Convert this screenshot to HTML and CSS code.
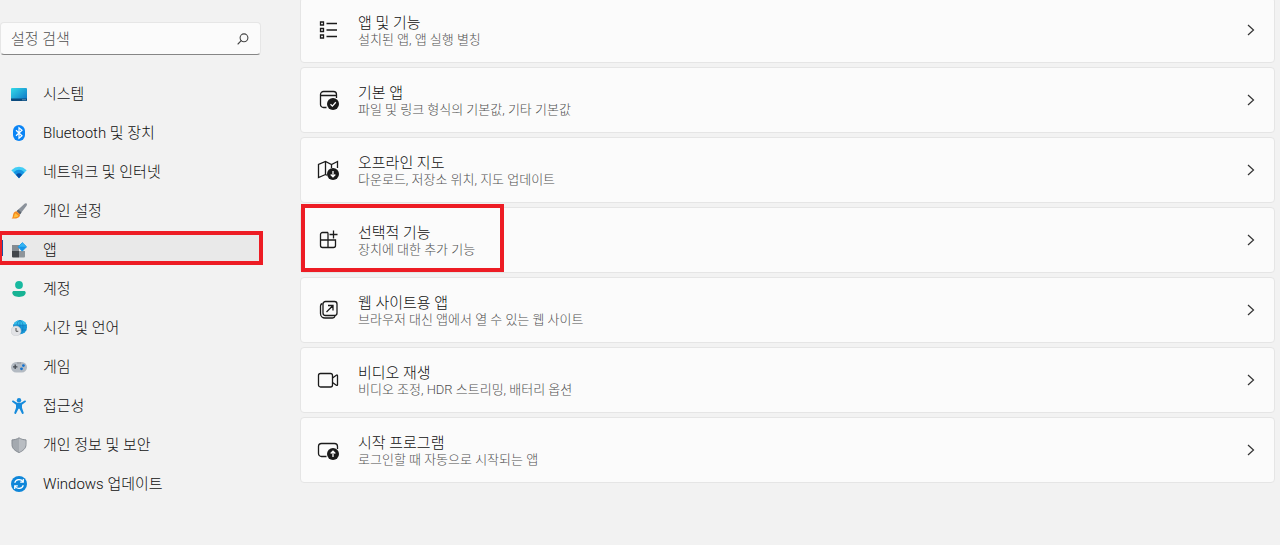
FILE: index.html
```html
<!DOCTYPE html>
<html lang="ko">
<head>
<meta charset="utf-8">
<title>설정 - 앱</title>
<link rel="stylesheet" href="styles.css">
</head>
<body>
<div class="settings">
  <aside class="sidebar">
    <form class="search" role="search">
      <input class="search-input" type="search" placeholder="설정 검색" aria-label="설정 검색">
      <button class="search-button" type="submit" aria-label="검색">
        <svg width="12" height="12" viewBox="0 0 12 12" fill="none" stroke="#444" stroke-width="1.1" stroke-linecap="round"><circle cx="7" cy="4.8" r="3.9"/><path d="M4.2 7.6 1 11"/></svg>
      </button>
    </form>
    <nav class="nav" aria-label="설정">
      <a class="nav-item" href="#system">
        <svg class="nav-icon" viewBox="0 0 16 16"><defs><linearGradient id="gs" x1="0" y1="0" x2="1" y2="1"><stop offset="0" stop-color="#34dbe8"/><stop offset="1" stop-color="#0b6fc4"/></linearGradient></defs><rect y="2" width="16" height="13" rx="1" fill="url(#gs)"/><path d="M0 12.5h16V14a1 1 0 0 1-1 1H1a1 1 0 0 1-1-1z" fill="#0b4a7d"/><path d="M11.5 13.8h1M13.5 13.8h1" stroke="#bfe6fa" stroke-width=".9"/></svg>
        <span>시스템</span></a>
      <a class="nav-item" href="#bluetooth">
        <svg class="nav-icon" viewBox="0 0 16 16"><rect x="2" width="12" height="16" rx="6" fill="#0a84f5"/><path d="m5 5.2 6 5.5-3 2.6V2.7l3 2.6-6 5.5" fill="none" stroke="#fff" stroke-width="1.2"/></svg>
        <span>Bluetooth 및 장치</span></a>
      <a class="nav-item" href="#network">
        <svg class="nav-icon" viewBox="0 0 16 16"><path d="M.3 6.2Q8-.6 15.7 6.2L8 14.2z" fill="#43cdf5"/><path d="M2.6 8.2Q8 3.4 13.4 8.2L8 14.2z" fill="#1694e2"/><path d="M5 10.7Q8 8 11 10.7L8 14.2z" fill="#0a4da3"/></svg>
        <span>네트워크 및 인터넷</span></a>
      <a class="nav-item" href="#personalization">
        <svg class="nav-icon" viewBox="0 0 16 16"><path d="M15.6.5c.8.8.2 1.8-.2 2.4L9.2 11 5.7 8 13 1.2c.7-.6 1.8-1.4 2.6-.7z" fill="#8b929b"/><path d="m7.3 6.6 3.2 2.8L9 11.4 5.6 8.2z" fill="#5c6570"/><path d="M5.5 8.3 9 11.4c.2 2.9-2.7 4.5-8.7 4.1 2-.8 1.2-2.7 2-4.6.6-1.5 1.8-2.4 3.2-2.6z" fill="#f58a1f"/><path d="M4.5 10.3c-1.3.8-1 3-2 4.1 2.4.2 4.4-.6 5-1.7z" fill="#ffc03e"/></svg>
        <span>개인 설정</span></a>
      <a class="nav-item nav-item-current" href="#apps" aria-current="page">
        <svg class="nav-icon" viewBox="0 0 16 16"><path d="M1 3h7v6H1z" fill="#858b91"/><path d="M1 9h7v6.5H2a1 1 0 0 1-1-1z" fill="#42464b"/><path d="M8 9h6v5.5a1 1 0 0 1-1 1H8z" fill="#8f959a"/><path d="m11.3.7 4.2 4.1-4.2 4.3-4.1-4.3z" fill="#1594e7" stroke="#1594e7" stroke-linejoin="round"/><path d="m11.3.7 4.2 4.1h-8.3z" fill="#35b4f3"/></svg>
        <span>앱</span></a>
      <a class="nav-item" href="#accounts">
        <svg class="nav-icon" viewBox="0 0 16 16"><circle cx="8" cy="4" r="3.9" fill="#18b9a0"/><path d="M3 10h10c1 0 1.7.7 1.7 1.6 0 2.7-2.5 4.4-6.7 4.4s-6.700-1.700-6.700-4.400C1.300 10.700 2 10 3 10z" fill="#17b394"/></svg>
        <span>계정</span></a>
      <a class="nav-item" href="#time">
        <svg class="nav-icon" viewBox="0 0 16 16"><circle cx="9" cy="7.2" r="7" fill="#1798d8"/><path d="M9 .2a7 7 0 0 1 6.6 4.800H2.400A7 7 0 0 1 9 .2z" fill="#35bde9"/><path d="M2.200 5h13.600M3 10h12.500M9 .2v14M6 5Q6 1.500 9 .2q3 1.300 3 6.800t-3 7" fill="none" stroke="#0d6fb7" stroke-width=".5"/><circle cx="5" cy="11" r="5" fill="#e2e3e6" stroke="#c4c6ca" stroke-width=".5"/><path d="M5 8v3.300h2.300" fill="none" stroke="#555" stroke-width="1"/></svg>
        <span>시간 및 언어</span></a>
      <a class="nav-item" href="#gaming">
        <svg class="nav-icon" viewBox="0 0 16 16"><rect y="3" width="16" height="10.500" rx="5.200" fill="#b3bac2"/><path d="M2 7.800h4.400M4.200 5.600V10" stroke="#454b52" stroke-width="1.300"/><path d="M6.500 4h1M8.600 4h1" stroke="#666" stroke-width=".9"/><circle cx="12.400" cy="6.600" r="1.400" fill="#1473cf"/><circle cx="10.500" cy="9.800" r="1.400" fill="#1473cf"/></svg>
        <span>게임</span></a>
      <a class="nav-item" href="#accessibility">
        <svg class="nav-icon" viewBox="0 0 16 16" fill="#168bdc"><circle cx="8" cy="2.200" r="2.200"/><path d="M2.300 2.600 6 4.800h4l3.700-2.200c1-.5 1.800.8.900 1.500L11 6.700v3.100l1.700 5c.3 1.100-1.300 1.700-1.800.6L8.500 10.800h-1l-2.400 4.600c-.5 1.100-2.100.5-1.800-.6l1.700-5V6.700L1.400 4.100c-.9-.7-.1-2 .9-1.500z"/></svg>
        <span>접근성</span></a>
      <a class="nav-item" href="#privacy">
        <svg class="nav-icon" viewBox="0 0 16 16"><path d="M8 .8c2 1.400 4.300 2 7 2.100v4.600c0 4-3.200 6.500-7 8-3.800-1.500-7-4-7-8V2.900C3.700 2.800 6 2.200 8 .8z" fill="#a4a9af" stroke="#858b92"/><path d="M8 1.500c1.800 1.200 4 1.800 6.500 1.900v4.100c0 3.600-2.800 6-6.500 7.500z" fill="#b9bdc2"/></svg>
        <span>개인 정보 및 보안</span></a>
      <a class="nav-item" href="#update">
        <svg class="nav-icon" viewBox="0 0 16 16"><circle cx="8" cy="8" r="8" fill="#0f86d9"/><path d="M3.700 6.800A4.600 4.600 0 0 1 12 5.800M12.300 9.200A4.600 4.600 0 0 1 4 10.200M12.300 3v3.200H9.200M3.700 13V9.800h3.100" fill="none" stroke="#fff" stroke-width="1.200"/></svg>
        <span>Windows 업데이트</span></a>
    </nav>
  </aside>

  <main class="cards">
    <a class="card" href="#apps-features">
      <svg class="card-icon" viewBox="0 0 20 20"><path d="M1.500 2h3v3h-3zM1.500 8.500h3v3h-3zM1.500 15h3v3h-3zM7.500 3.500H18M7.500 10H18M7.500 16.500H18"/></svg>
      <span class="card-text"><span class="card-title">앱 및 기능</span><span class="card-note">설치된 앱, 앱 실행 별칭</span></span>
      <svg class="chevron" viewBox="0 0 8 12"><path d="m1 1 5.500 5L1 11"/></svg>
    </a>
    <a class="card" href="#default-apps">
      <svg class="card-icon" viewBox="0 0 20 20"><path d="M7.500 17.500h-3a3 3 0 0 1-3-3v-10a3 3 0 0 1 3-3h10a3 3 0 0 1 3 3V8M1.500 5.500h16"/><circle class="solid" cx="14" cy="14" r="6"/><path class="light" d="m11.500 14.200 1.900 1.900 3.400-3.900"/></svg>
      <span class="card-text"><span class="card-title">기본 앱</span><span class="card-note">파일 및 링크 형식의 기본값, 기타 기본값</span></span>
      <svg class="chevron" viewBox="0 0 8 12"><path d="m1 1 5.500 5L1 11"/></svg>
    </a>
    <a class="card" href="#offline-maps">
      <svg class="card-icon" viewBox="0 0 20 20"><path d="M6.500 14.500-.5 17.500V4.500l7-3 6 3 6-3V8M6.500 1.500v13l1.500.8M12.500 4.500V8"/><circle class="solid" cx="14" cy="14" r="6"/><path class="light" d="M14 11v5.500M11.700 14.500l2.300 2.300 2.300-2.300"/></svg>
      <span class="card-text"><span class="card-title">오프라인 지도</span><span class="card-note">다운로드, 저장소 위치, 지도 업데이트</span></span>
      <svg class="chevron" viewBox="0 0 8 12"><path d="m1 1 5.500 5L1 11"/></svg>
    </a>
    <a class="card card-marked" href="#optional-features">
      <svg class="card-icon" viewBox="0 0 20 20"><path d="M9 2.500H3.500a2 2 0 0 0-2 2v11a2 2 0 0 0 2 2h11a2 2 0 0 0 2-2V10h-15M9 2.500v15M14.500.5v8M10.500 4.500h8"/></svg>
      <span class="card-text"><span class="card-title">선택적 기능</span><span class="card-note">장치에 대한 추가 기능</span></span>
      <svg class="chevron" viewBox="0 0 8 12"><path d="m1 1 5.500 5L1 11"/></svg>
    </a>
    <a class="card" href="#web-apps">
      <svg class="card-icon" viewBox="0 0 20 20"><rect x="4" y="1.500" width="14" height="14" rx="2.500"/><path d="M3.500 3.500c-1.300.3-2 1.300-2 2.500v7.500a4.500 4.500 0 0 0 4.500 4.500h7.500c1.200 0 2.200-.8 2.500-2M7.500 12 14 5.500M9 5.500h5v5"/></svg>
      <span class="card-text"><span class="card-title">웹 사이트용 앱</span><span class="card-note">브라우저 대신 앱에서 열 수 있는 웹 사이트</span></span>
      <svg class="chevron" viewBox="0 0 8 12"><path d="m1 1 5.500 5L1 11"/></svg>
    </a>
    <a class="card" href="#video">
      <svg class="card-icon" viewBox="0 0 20 20"><rect x="-.5" y="3.500" width="14" height="13.500" rx="2"/><path d="m13.500 8 3.800-2.800q1.200-.7 1.200.5v9q0 1.200-1.200.5L13.500 12.400"/></svg>
      <span class="card-text"><span class="card-title">비디오 재생</span><span class="card-note">비디오 조정, HDR 스트리밍, 배터리 옵션</span></span>
      <svg class="chevron" viewBox="0 0 8 12"><path d="m1 1 5.500 5L1 11"/></svg>
    </a>
    <a class="card" href="#startup">
      <svg class="card-icon" viewBox="0 0 20 20"><path d="M7.500 16.500h-5a3 3 0 0 1-3-3v-7a3 3 0 0 1 3-3h13a3 3 0 0 1 3 3V9"/><circle class="solid" cx="14" cy="14" r="6"/><path class="light" d="M14 17v-5.500M11.700 13.500l2.300-2.300 2.300 2.300"/></svg>
      <span class="card-text"><span class="card-title">시작 프로그램</span><span class="card-note">로그인할 때 자동으로 시작되는 앱</span></span>
      <svg class="chevron" viewBox="0 0 8 12"><path d="m1 1 5.500 5L1 11"/></svg>
    </a>
  </main>
</div>
</body>
</html>
```

FILE: styles.css
```css
*,
*::after {
  box-sizing: border-box;
}

body {
  margin: 0;
  background: #f2f2f2;
  color: #101010;
  font-family: Roboto, "Noto Sans CJK KR", sans-serif;
  font-size: 15px;
  font-weight: 300;
}

a {
  color: inherit;
  text-decoration: none;
}

.settings {
  display: grid;
  grid-template-columns: 261px 1fr;
  column-gap: 39px;
  min-height: 100vh;
  padding-right: 5px;
  overflow: hidden;
}

.sidebar {
  padding-top: 22px;
}

.search {
  display: flex;
  align-items: center;
  height: 33px;
  padding: 0 11px 0 10px;
  background: #fbfbfb;
  border: 1px solid #e6e6e6;
  border-bottom-color: #868686;
  border-radius: 4px;
}

.search-input {
  flex: 1;
  min-width: 0;
  padding: 0;
  border: 0;
  outline: 0;
  background: none;
  font: inherit;
}

.search-input::placeholder {
  color: #505050;
  opacity: 1;
}

.search-button {
  display: flex;
  padding: 0;
  border: 0;
  background: none;
}

.nav {
  display: flex;
  flex-direction: column;
  gap: 5px;
  padding-top: 20px;
}

.nav-item {
  position: relative;
  display: flex;
  align-items: center;
  gap: 16px;
  height: 34px;
  padding: 4px 0 0 11px;
  line-height: 20px;
}

.nav-icon {
  width: 16px;
  height: 16px;
}

.nav-item-current {
  background: linear-gradient(#1b4fa0, #1b4fa0) left center / 3px 16px no-repeat #e9e9e9;
}

.nav-item-current::after {
  content: "";
  position: absolute;
  inset: 0 -2px 0 -2px;
  border: 4px solid #ed1c24;
}

.cards {
  display: flex;
  flex-direction: column;
  gap: 4px;
  margin-top: -3px;
}

.card {
  position: relative;
  display: flex;
  align-items: center;
  height: 66px;
  padding: 0 19px 0 18px;
  background: #fbfbfb;
  border: 1px solid #e5e5e5;
  border-radius: 4px;
}

.card-icon {
  width: 20px;
  height: 20px;
  margin-right: 19px;
  overflow: visible;
  fill: none;
  stroke: #1b1b1b;
  stroke-width: 1.3;
}

.card-icon .solid {
  fill: #1b1b1b;
  stroke: none;
}

.card-icon .light {
  stroke: #fff;
}

.card-text {
  display: flex;
  flex: 1;
  flex-direction: column;
  padding-top: 2px;
}

.card-title {
  line-height: 18px;
}

.card-note {
  color: #505050;
  font-size: 13px;
  line-height: 16px;
}

.chevron {
  width: 8px;
  height: 12px;
  fill: none;
  stroke: #333;
  stroke-width: 1.2;
}

.card-marked::after {
  content: "";
  position: absolute;
  top: -4px;
  bottom: 0;
  left: 0;
  width: 203px;
  border: 4px solid #ed1c24;
}
```
